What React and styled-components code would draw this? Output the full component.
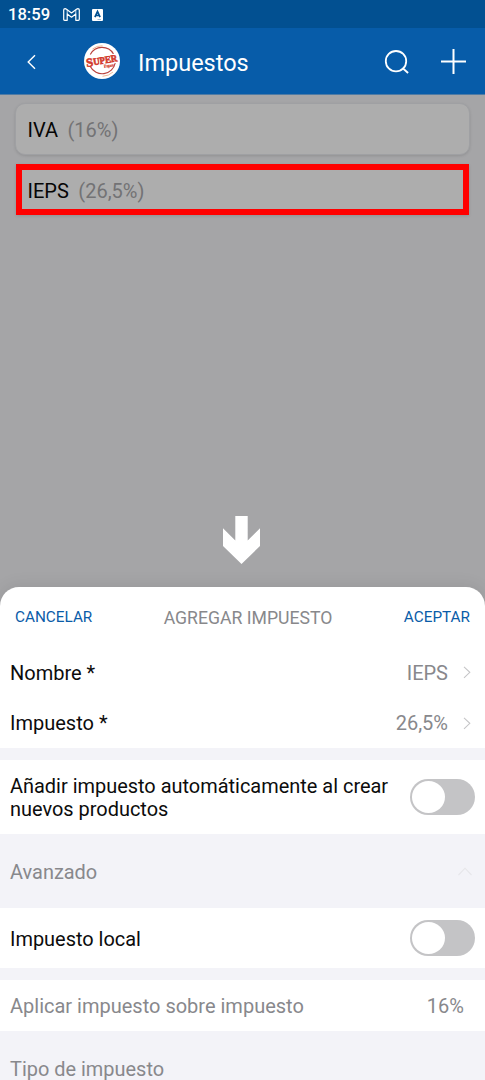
import React, { useState } from 'react';
import styled, { createGlobalStyle } from 'styled-components';

const GlobalStyle = createGlobalStyle`
* {
    box-sizing: border-box;
}
body {
    margin: 0;
    font-family: Roboto, "Liberation Sans", sans-serif;
    background: #a5a5a7;
}
button {
    padding: 0;
    border: none;
    background: none;
    font-family: inherit;
}
svg {
    display: block;
    flex: none;
}
`

const Screen = styled.div`
display: flex;
flex-direction: column;
width: 485px;
height: 1080px;
overflow: hidden;
background: #a5a5a7;
`

const StatusBar = styled.div`
display: flex;
align-items: center;
flex: none;
height: 28px;
padding: 1px 8px 0;
background: #025091;
color: #fff;
font-size: 16.6px;
font-weight: 500;

svg {
    margin-left: 13px;
}

svg + svg {
    margin-left: 12px;
}
`

const NavBar = styled.header`
display: flex;
align-items: center;
flex: none;
height: 67px;
padding: 1px 19px 0 26px;
background: #075ca9;
border-bottom: 1px solid #4f7ba5;
color: #fff;
`

const Logo = styled.svg`
margin: 0 0 1px 46px;
overflow: visible;
`

const Title = styled.h1`
flex: 1;
margin: 2px 0 0 18px;
font-size: 23.5px;
font-weight: 400;
`

const NavActions = styled.div`
display: flex;
align-items: center;
gap: 31px;
`

const TaxList = styled.div`
display: flex;
flex-direction: column;
gap: 9px;
flex: none;
padding: 8px 15px 0;
`

const TaxCard = styled.div`
display: flex;
align-items: center;
gap: 9.5px;
height: ${props => props.$selected ? '51px' : '52px'};
margin: ${props => props.$selected ? '0 1px' : '0'};
padding: 2px 0 0 ${props => props.$selected ? '5.5px' : '11.5px'};
background: #adadad;
border: ${props => props.$selected ? '6px solid #ff0000' : '1px solid #9fa0a3'};
border-radius: ${props => props.$selected ? '0' : '10px'};
box-shadow: 0 1px 3px rgba(0, 0, 0, 0.12);
font-size: 20px;
color: #050505;

span {
    color: #737375;
}
`

const ArrowArea = styled.div`
display: flex;
flex: 1;
justify-content: center;
align-items: flex-end;
padding: 0 2px 23px 0;
`

const Sheet = styled.section`
flex: none;
height: 493px;
overflow: hidden;
background: #fff;
border-radius: 19px 19px 0 0;
box-shadow: 0 -2px 16px rgba(0, 0, 0, 0.08);
font-size: 20px;
`

const SheetHeader = styled.div`
display: flex;
align-items: center;
justify-content: space-between;
height: 60px;
padding: 0 15px 1px;

h2 {
    margin: 2px 0 0;
    font-size: 17.65px;
    font-weight: 400;
    color: #88888b;
}
`

const TextButton = styled.button`
font-size: 15.3px;
color: #0a5ca8;
`

const Row = styled.div`
display: flex;
align-items: center;
justify-content: space-between;
height: ${props => props.$height || 51}px;
padding: 0 10px;
background: ${props => props.$grey ? '#f3f3f8' : '#fff'};
color: ${props => props.$muted ? '#88888c' : '#0c0c0c'};
line-height: 24px;
`

const Label = styled.div`
width: 385px;
padding-top: 2px;
font-size: 19.95px;
line-height: 23px;
`

const Value = styled.div`
display: flex;
align-items: center;
gap: 15px;
padding-right: ${props => props.$inset || 0}px;
color: #88888c;
`

const Gap = styled.div`
height: 12px;
background: #f3f3f8;
`

const Track = styled.button`
display: flex;
flex: none;
align-items: center;
justify-content: ${props => props.$on ? 'flex-end' : 'flex-start'};
width: 65px;
height: 36px;
padding: 0 2px;
border-radius: 18px;
background: ${props => props.$on ? '#075ca9' : '#c4c4c6'};

span {
    width: 33px;
    height: 32px;
    border-radius: 50%;
    background: #fff;
}
`

const MailIcon = () => (
    <svg width="17" height="13" viewBox="0 0 17 13" fill="none" stroke="#fff" strokeWidth="1.2" strokeLinejoin="round">
        <path d="M.7 2.1Q.7.7 2.1.7L3.2 1 8.5 5 13.8 1l1.1-.3q1.4 0 1.4 1.4v9.2q0 1-1 1h-2.5V6L8.5 9.2 4.2 6v6.3H1.7q-1 0-1-1z" />
        <path d="M4.2 6V1.8M12.8 6V1.8" strokeWidth=".8" />
    </svg>
)

const AppBadgeIcon = () => (
    <svg width="11" height="12" viewBox="0 0 11 12">
        <rect width="11" height="12" rx="1" fill="#fff" />
        <path d="M2.9 8.2 5.5 2.6l2.6 5.6M3.9 6.5h3.2" fill="none" stroke="#025091" strokeWidth="1.7" />
        <path d="M5.5 10.5h3.5" stroke="#8eb0cd" strokeWidth=".8" />
    </svg>
)

const BackIcon = () => (
    <svg width="12" height="16" viewBox="0 0 12 16" fill="none" stroke="#fff" strokeWidth="1.4">
        <path d="M9 1.2 2.2 8 9 14.8" />
    </svg>
)

const SearchIcon = () => (
    <svg width="26" height="26" viewBox="0 0 26 26" fill="none" stroke="#fff" strokeWidth="1.8">
        <circle cx="12" cy="12.2" r="10.2" />
        <path d="m18.5 19 5.6 5" />
    </svg>
)

const PlusIcon = () => (
    <svg width="25" height="25" viewBox="0 0 25 25" stroke="#fff" strokeWidth="2">
        <path d="M0 12.5h25M12.5 0v25" />
    </svg>
)

const StoreLogo = () => (
    <Logo width="36" height="36" viewBox="0 0 36 36">
        <circle cx="18" cy="18" r="18" fill="#fff" />
        <g fill="none">
            <path d="M6.3 11.5A13.3 13.3 0 0 1 29.5 11" stroke="#b9423c" strokeWidth="1.2" />
            <path d="M6.3 23.5A13.3 13.3 0 0 0 31.2 20" stroke="#b9423c" strokeWidth="1.2" />
            <path d="M8.5 6Q13 2.5 18.5 2.8" stroke="#efb996" strokeWidth="1" />
            <path d="M18.5 33.3Q25 33 29 29" stroke="#efb996" strokeWidth="1" />
        </g>
        <path d="m3 15 29-4.5v9.5L3 23z" fill="#fff" />
        <g fill="#d33b2c" fontFamily="Liberation Serif, serif" fontWeight="700" stroke="#d33b2c" strokeWidth=".6" transform="rotate(-9 18 18)">
            <text x="2" y="21.6" fontSize="12" textLength="7" lengthAdjust="spacingAndGlyphs">S</text>
            <text x="9.2" y="20.8" fontSize="10" textLength="24.3" lengthAdjust="spacingAndGlyphs">UPER</text>
            <text x="19" y="25.2" fontSize="4.8" strokeWidth=".1" textLength="10">Papos</text>
        </g>
    </Logo>
)

const ChevronRight = () => (
    <svg width="8" height="13" viewBox="0 0 8 13" fill="none" stroke="#c5c5c7" strokeWidth="1.1">
        <path d="m1 .8 5.8 5.5L1 11.8" />
    </svg>
)

const ChevronUp = () => (
    <svg width="14" height="9" viewBox="0 0 14 9" fill="none" stroke="#e6e6ea" strokeWidth="1.1">
        <path d="M.5 8 7 1.2 13.5 8" />
    </svg>
)

const DownArrow = () => (
    <svg width="37" height="48" viewBox="0 0 37 48" fill="#fff">
        <path d="M12.3 0h12.4v24.5L37 12.3V30L18.5 48 0 30V12.3l12.3 12.2z" />
    </svg>
)

const Toggle = ({ label }) => {
    const [on, setOn] = useState(false)
    return (
        <Track $on={on} onClick={() => setOn(!on)} role="switch" aria-checked={on} aria-label={label}>
            <span />
        </Track>
    )
}

const taxes = [
    { name: 'IVA', rate: '16%' },
    { name: 'IEPS', rate: '26,5%' }
]

const App = () => {
    const selected = taxes[1]

    return (
        <Screen>
            <GlobalStyle />
            <StatusBar>
                18:59
                <MailIcon />
                <AppBadgeIcon />
            </StatusBar>
            <NavBar>
                <BackIcon />
                <StoreLogo />
                <Title>Impuestos</Title>
                <NavActions>
                    <SearchIcon />
                    <PlusIcon />
                </NavActions>
            </NavBar>
            <TaxList>
                {taxes.map(tax => (
                    <TaxCard key={tax.name} $selected={tax === selected}>
                        {tax.name} <span>({tax.rate})</span>
                    </TaxCard>
                ))}
            </TaxList>
            <ArrowArea>
                <DownArrow />
            </ArrowArea>
            <Sheet>
                <SheetHeader>
                    <TextButton>CANCELAR</TextButton>
                    <h2>AGREGAR IMPUESTO</h2>
                    <TextButton>ACEPTAR</TextButton>
                </SheetHeader>
                <Row>
                    Nombre *
                    <Value $inset={4}>{selected.name} <ChevronRight /></Value>
                </Row>
                <Row $height={50}>
                    Impuesto *
                    <Value $inset={4}>{selected.rate} <ChevronRight /></Value>
                </Row>
                <Gap />
                <Row $height={74}>
                    <Label>Añadir impuesto automáticamente al crear nuevos productos</Label>
                    <Toggle label="Añadir impuesto automáticamente" />
                </Row>
                <Row $height={74} $grey $muted>
                    <Label>Avanzado</Label>
                    <Value $inset={3}><ChevronUp /></Value>
                </Row>
                <Row $height={60}>
                    <Label>Impuesto local</Label>
                    <Toggle label="Impuesto local" />
                </Row>
                <Gap />
                <Row $muted>
                    Aplicar impuesto sobre impuesto
                    <Value $inset={11}>16%</Value>
                </Row>
                <Row $height={74} $grey $muted>
                    <Label>Tipo de impuesto</Label>
                </Row>
            </Sheet>
        </Screen>
    );
}

export default App;
